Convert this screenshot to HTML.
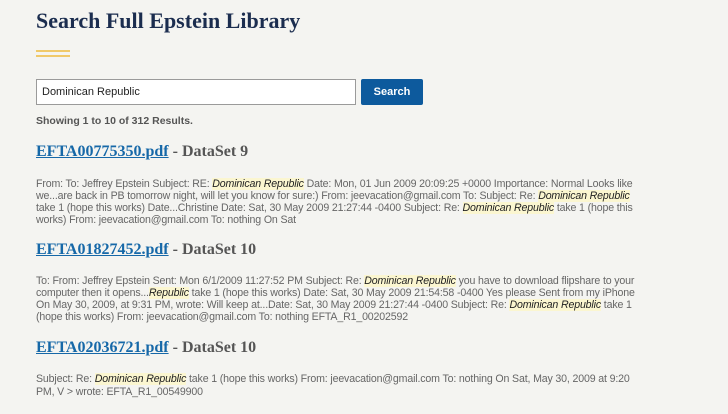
<html><head><style>
body{margin:0;width:728px;height:414px;background:#f4f4f1;position:relative;overflow:hidden;font-family:"Liberation Sans",sans-serif}
.a{position:absolute;white-space:nowrap}
h1{position:absolute;left:36px;top:8px;margin:0;font:bold 22px "Liberation Serif",serif;color:#1b2d4f}
.g{position:absolute;left:36px;width:34px;height:2px;background:#f0c96a}
.inp{position:absolute;left:36px;top:79px;border:1px solid #9a9a9a;background:#fff;font-size:11px;line-height:24px;padding-left:5px;box-sizing:border-box;width:320px;height:26px;color:#222}
.btn{position:absolute;left:361px;top:79px;width:62px;height:26px;background:#0d5a9d;border-radius:2px;color:#fff;font-weight:bold;font-size:11px;text-align:center;line-height:26px}
.h{position:absolute;left:36px;font:bold 16px "Liberation Serif",serif;color:#555;white-space:nowrap}
.h u{color:#1668a8;text-decoration:underline}
.t{position:absolute;left:36px;font-size:10.6px;color:#666;white-space:nowrap;line-height:12px;letter-spacing:-0.15px}
.t i{background:#fbf6d0;color:#222}
</style></head><body>
<h1>Search Full Epstein Library</h1>
<div class="g" style="top:50px"></div><div class="g" style="top:55px"></div>
<div class="inp">Dominican Republic</div>
<div class="btn">Search</div>
<div class="a" style="left:36px;top:115px;font-size:10.5px;font-weight:bold;color:#555">Showing 1 to 10 of 312 Results.</div>

<div class="h" style="top:143px"><u>EFTA00775350.pdf</u> - DataSet 9</div>
<div class="t" style="top:178px">From: To: Jeffrey Epstein Subject: RE: <i>Dominican Republic</i> Date: Mon, 01 Jun 2009 20:09:25 +0000 Importance: Normal Looks like</div>
<div class="t" style="top:190px">we...are back in PB tomorrow night, will let you know for sure:) From: jeevacation@gmail.com To: Subject: Re: <i>Dominican Republic</i></div>
<div class="t" style="top:202px">take 1 (hope this works) Date...Christine Date: Sat, 30 May 2009 21:27:44 -0400 Subject: Re: <i>Dominican Republic</i> take 1 (hope this</div>
<div class="t" style="top:214px">works) From: jeevacation@gmail.com To: nothing On Sat</div>

<div class="h" style="top:241px"><u>EFTA01827452.pdf</u> - DataSet 10</div>
<div class="t" style="top:275px">To: From: Jeffrey Epstein Sent: Mon 6/1/2009 11:27:52 PM Subject: Re: <i>Dominican Republic</i> you have to download flipshare to your</div>
<div class="t" style="top:287px">computer then it opens...<i>Republic</i> take 1 (hope this works) Date: Sat, 30 May 2009 21:54:58 -0400 Yes please Sent from my iPhone</div>
<div class="t" style="top:299px">On May 30, 2009, at 9:31 PM, wrote: Will keep at...Date: Sat, 30 May 2009 21:27:44 -0400 Subject: Re: <i>Dominican Republic</i> take 1</div>
<div class="t" style="top:311px">(hope this works) From: jeevacation@gmail.com To: nothing EFTA_R1_00202592</div>

<div class="h" style="top:339px"><u>EFTA02036721.pdf</u> - DataSet 10</div>
<div class="t" style="top:373px">Subject: Re: <i>Dominican Republic</i> take 1 (hope this works) From: jeevacation@gmail.com To: nothing On Sat, May 30, 2009 at 9:20</div>
<div class="t" style="top:386px">PM, V &gt; wrote: EFTA_R1_00549900</div>
</body></html>
